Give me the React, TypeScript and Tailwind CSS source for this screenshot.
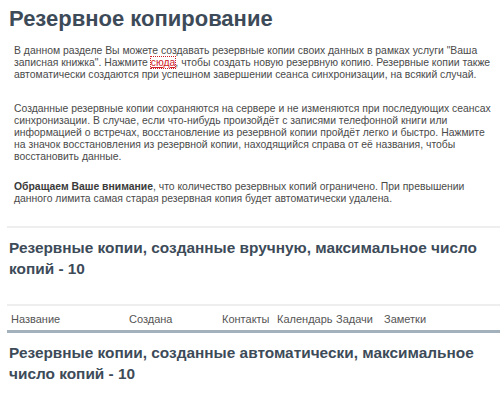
export default function App() {
  const cols = [
    { label: "Название", w: "w-[118px]" },
    { label: "Создана", w: "w-[93px]" },
    { label: "Контакты", w: "w-[55px]" },
    { label: "Календарь", w: "w-[59px]" },
    { label: "Задачи", w: "w-[48px]" },
    { label: "Заметки", w: "w-[60px]" },
  ];

  return (
    <div className="w-[500px] h-[394px] overflow-hidden bg-white font-['Liberation_Sans',Arial,sans-serif]">
      <h1 className="pl-[9px] pt-[5px] text-[22px] leading-[28px] font-bold text-[#3d4b59]">
        Резервное копирование
      </h1>

      <div className="pl-[14px] pt-[12px] text-[10.4px] leading-[12px] whitespace-nowrap text-[#4a4a4a]">
        <p>
          В данном разделе Вы можете создавать резервные копии своих данных в рамках услуги "Ваша
          <br />
          записная книжка". Нажмите{" "}
          <a className="text-[#d0202a] underline outline outline-1 outline-dotted outline-[#d0202a]">
            сюда
          </a>
          , чтобы создать новую резервную копию. Резервные копии также
          <br />
          автоматически создаются при успешном завершении сеанса синхронизации, на всякий случай.
        </p>
        <p className="mt-[22px]">
          Созданные резервные копии сохраняются на сервере и не изменяются при последующих сеансах
          <br />
          синхронизации. В случае, если что-нибудь произойдёт с записями телефонной книги или
          <br />
          информацией о встречах, восстановление из резервной копии пройдёт легко и быстро. Нажмите
          <br />
          на значок восстановления из резервной копии, находящийся справа от её названия, чтобы
          <br />
          восстановить данные.
        </p>
        <p className="mt-[18px]">
          <b className="text-[#3a3a3a]">Обращаем Ваше внимание</b>, что количество резервных копий
          ограничено. При превышении
          <br />
          данного лимита самая старая резервная копия будет автоматически удалена.
        </p>
      </div>

      <div className="ml-[7px] mt-[21px] border-t-2 border-[#eeeeee]">
        <h2 className="pl-[2px] pt-[9px] pb-[25px] text-[15.4px] leading-[21px] font-bold text-[#3d4b59]">
          Резервные копии, созданные вручную, максимальное число копий - 10
        </h2>
      </div>

      <div className="ml-[7px] border-t-2 border-[#eeeeee]">
        <div className="flex pl-[4px] pt-[7px] pb-[5px] text-[11px] leading-[12px] text-[#555] border-b-[3px] border-[#a3b1bd]">
          {cols.map((c) => (
            <span key={c.label} className={c.w}>
              {c.label}
            </span>
          ))}
        </div>
        <h2 className="pl-[2px] pt-[9px] text-[15.4px] leading-[21px] font-bold text-[#3d4b59]">
          Резервные копии, созданные автоматически, максимальное число копий -
          10
        </h2>
      </div>
    </div>
  );
}
